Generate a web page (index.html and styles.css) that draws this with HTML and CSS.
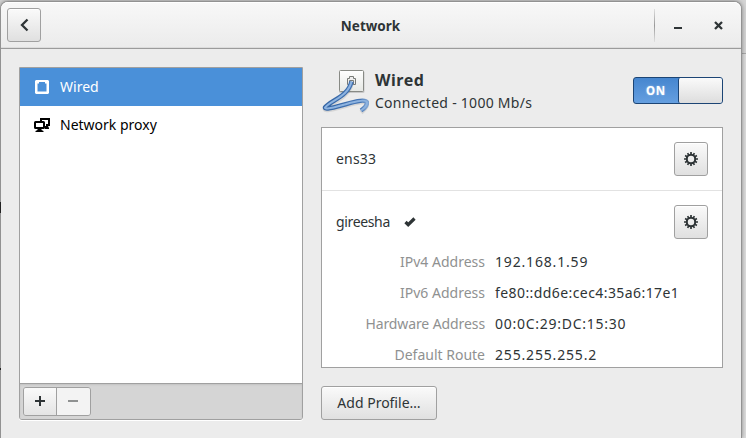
FILE: index.html
```html
<!DOCTYPE html>
<html lang="en">
<head>
<meta charset="utf-8">
<title>Network</title>
<link rel="stylesheet" href="styles.css">
</head>
<body>
<svg width="0" height="0" class="defs">
  <symbol id="gear" viewBox="0 0 14 14">
    <circle cx="7" cy="7" r="4.200" fill="none" stroke="#2e3436" stroke-width="2"/>
    <path stroke="#2e3436" stroke-width="1.700" d="M7 0v3M7 11v3M0 7h3M11 7h3M3.600 1.100l1.300 2.300M9.100 10.600l1.300 2.300M1.100 3.600l2.300 1.300M10.600 9.100l2.300 1.300M1.100 10.400l2.300-1.300M10.600 4.900l2.300-1.300M3.600 12.900l1.300-2.300M9.100 3.400l1.300-2.300"/>
  </symbol>
</svg>
<span class="edge edge-mark"></span>
<span class="edge edge-mark-low"></span>
<div class="window">
  <header class="titlebar">
    <button class="button back" aria-label="Back">
      <svg width="16" height="16" viewBox="0 0 16 16"><path d="M11.500 2.500L6 8l5.500 5.500" fill="none" stroke="#2e3436" stroke-width="2.300"/></svg>
    </button>
    <h1 class="title">Network</h1>
    <div class="controls">
      <svg width="8" height="12" viewBox="0 0 8 12"><path d="M0 9h8" stroke="#2e3436" stroke-width="2"/></svg>
      <svg width="9" height="9" viewBox="0 0 9 9"><path d="M1 1l7 7M8 1l-7 7" stroke="#2e3436" stroke-width="2.300"/></svg>
    </div>
  </header>
  <main class="content">
    <aside class="sidebar">
      <div class="devices">
        <div class="device selected">
          <svg width="16" height="16" viewBox="0 0 16 16"><path fill="#fff" fill-rule="evenodd" d="M2 1h12l1 1v12l-1 1H2l-1-1V2zM5 3v1.500H3.500V12.500h9V4.500H11V3z"/></svg>
          <span>Wired</span>
        </div>
        <div class="device">
          <svg width="16" height="16" viewBox="0 0 16 16"><path d="M7 4V2h8v6h-3" fill="none" stroke="#000" stroke-width="2"/><path d="M11 9h3l1 2v1h-4z"/><rect x="1" y="5" width="9" height="6" rx=".5" fill="#fff" stroke="#000" stroke-width="2"/><path d="M3.500 12h4v1l2 1v1h-8v-1l2-1z"/></svg>
          <span>Network proxy</span>
        </div>
      </div>
      <div class="toolbar">
        <div class="pair">
          <button class="tool" aria-label="Add"><svg width="10" height="10" viewBox="0 0 10 10"><path d="M5 0v10M0 5h10" stroke="#2e3436" stroke-width="2"/></svg></button>
          <button class="tool off" aria-label="Remove"><svg width="10" height="10" viewBox="0 0 10 10"><path d="M0 5h10" stroke="#8f9191" stroke-width="2"/></svg></button>
        </div>
      </div>
    </aside>
    <section class="details">
      <div class="summary">
        <svg class="plug" width="48" height="48" viewBox="0 0 48 48">
          <defs><linearGradient id="plate" x2="0" y2="1"><stop stop-color="#fff"/><stop offset="1" stop-color="#e5e7e3"/></linearGradient>
          <linearGradient id="fade"><stop stop-color="#3465a4"/><stop offset=".85" stop-color="#4676b5"/><stop offset="1" stop-color="#7fa3d0"/></linearGradient></defs>
          <rect x="18" y="4" width="25.500" height="22" rx="1.500" fill="#000" opacity=".15"/>
          <rect x="18.500" y="3.500" width="24" height="21" rx="1" fill="url(#plate)" stroke="#888a85"/>
          <path d="M26.500 17.500v-6h2v-2h4v2h2v6z" fill="#eee" stroke="#777a76"/>
          <path d="M28.500 17.500v-4h4v4" fill="#fff" stroke="#777a76"/>
          <path d="M30.500 15.500C27 31 10 34 4 41c-.5 2 7 .5 14-1.500 12-3.500 27-8 28-3.500 0 3.500-3 6-6 8.500" fill="none" stroke="#555" stroke-width="4.500" opacity=".15" transform="translate(0 1)"/>
          <path d="M30.500 14.500C27 30 10 33 4 40.500c-.5 2 7 .5 14-1.500 12-3.500 27-8 28-3.500 0 3.500-3 6-6 8" fill="none" stroke="url(#fade)" stroke-width="4.500"/>
          <path d="M30.500 14.500C27 30 10 33 4 40.500c-.5 2 7 .5 14-1.500 12-3.500 27-8 28-3.500 0 3.500-3 6-6 8" fill="none" stroke="#8db3e0" stroke-width="2"/>
        </svg>
        <div class="status">
          <h2 class="heading">Wired</h2>
          <div class="link">Connected - 1000 Mb/s</div>
        </div>
        <div class="switch"><span class="on">ON</span><span class="knob"></span></div>
      </div>
      <div class="profiles">
        <div class="profile">
          <span class="name-wide">ens33</span>
          <button class="button gear" aria-label="Options"><svg width="14" height="14"><use href="#gear"/></svg></button>
        </div>
        <div class="profile second">
          <span class="name-tight">gireesha</span>
          <svg class="check" width="12" height="10" viewBox="0 0 12 10"><path d="M1.500 5l2.700 2.700L10.500 1.500" fill="none" stroke="#2e3436" stroke-width="3.200"/></svg>
          <button class="button gear" aria-label="Options"><svg width="14" height="14"><use href="#gear"/></svg></button>
        </div>
        <dl class="facts">
          <dt>IPv4 Address</dt><dd class="numeric">192.168.1.59</dd>
          <dt>IPv6 Address</dt><dd class="mixed">fe80::dd6e:cec4:35a6:17e1</dd>
          <dt class="tight">Hardware Address</dt><dd class="mac">00:0C:29:DC:15:30</dd>
          <dt>Default Route</dt><dd class="numeric">255.255.255.2</dd>
        </dl>
      </div>
      <button class="button add"><span>Add Profile…</span></button>
    </section>
  </main>
</div>
</body>
</html>
```

FILE: styles.css
```css
* { box-sizing: border-box; }
html, body { margin: 0; height: 438px; overflow: hidden; }
body {
  position: relative;
  padding-top: 1px;
  background: linear-gradient(#d4d4d4 53px, #a9a9a9 53px, #a9a9a9 54px, #dcdcdc 54px);
  color: #2e3436;
  font: 14px/20px "Noto Sans", "Open Sans", sans-serif;
}
.defs { position: absolute; }
h1, h2, dl, dd, dt { margin: 0; }
svg { display: block; flex: none; }
span { white-space: nowrap; }
.edge { position: absolute; z-index: 1; left: 0; width: 1px; background: #222; }
.edge-mark { top: 202px; height: 11px; }
.edge-mark-low { top: 368px; height: 2px; }
.window {
  width: 742px;
  height: 437px;
  border: 1px solid #929292;
  border-bottom: 0;
  border-radius: 8px 8px 0 0;
  background: #ececec;
  box-shadow: 0 0 4px rgba(0,0,0,.4);
}
.titlebar {
  display: flex;
  align-items: center;
  height: 47px;
  padding: 0 18px 0 6px;
  border-bottom: 1px solid #9b9b9b;
  border-radius: 7px 7px 0 0;
  background: linear-gradient(#f8f8f8, #ebebeb);
  box-shadow: inset 0 1px #fff, inset 0 -1px #dcdcdc;
}
.title { flex: 1; padding: 2px 0 0 46px; text-align: center; font-size: 13.500px; line-height: 20px; }
.button {
  display: flex;
  align-items: center;
  justify-content: center;
  width: 34px;
  height: 34px;
  padding: 0;
  border: 1px solid #a0a0a0;
  border-radius: 3px;
  background: linear-gradient(#fafafa, #e0e0e0);
  box-shadow: inset 0 1px #fff;
  color: inherit;
  font: inherit;
}
.controls {
  display: flex;
  align-items: center;
  gap: 32px;
  height: 33px;
  padding-left: 19px;
  border-left: 1px solid;
  border-image: linear-gradient(#e4e4e4, #999 50%, #e4e4e4) 1;
}
.content { display: flex; gap: 18px; padding: 18px 18px 0; }
.sidebar { display: flex; flex-direction: column; width: 284px; height: 353px; border: 1px solid #a0a0a0; border-radius: 0 0 3px 3px; box-shadow: 0 1px #fff; }
.devices { flex: 1; background: #fff; color: #000; }
.device { display: flex; align-items: center; gap: 10px; height: 38px; padding-left: 14px; }
.selected { background: #4a90d9; color: #fff; }
.toolbar { height: 36px; padding: 3px; border-top: 1px solid #a0a0a0; border-radius: 0 0 2px 2px; background: #d5d5d5; box-shadow: inset 0 1px 2px #c2c2c2; }
.pair { display: flex; width: 68px; height: 29px; border: 1px solid #a0a0a0; border-radius: 3px; overflow: hidden; }
.tool { display: flex; flex: 0 0 32px; align-items: center; justify-content: center; padding: 0 0 1px; border: 0; background: linear-gradient(#fafafa, #e4e4e4); }
.off { flex: 1; padding-right: 2px; border-left: 1px solid #a0a0a0; background: #f3f3f3; }
.details { width: 402px; }
.summary { display: flex; height: 60px; }
.status { flex: 1; padding-left: 6px; }
.heading { margin-top: 3px; font-size: 16px; line-height: 21px; letter-spacing: .55px; }
.link { line-height: 24px; letter-spacing: .27px; }
.switch { display: flex; width: 90px; height: 27px; margin-top: 10px; border: 1px solid #1c4575; border-radius: 3px; background: linear-gradient(#4686cf, #659fe0); }
.on { flex: 1; color: #fff; font-size: 11.500px; font-weight: 700; line-height: 26px; text-align: center; text-shadow: 0 0 2px #fff8; letter-spacing: .9px; }
.knob { width: 44px; border-left: 1px solid #1c4575; border-radius: 2px; background: linear-gradient(#fafafa, #ddd); }
.profiles { height: 241px; overflow: hidden; border: 1px solid #a0a0a0; background: #fff; }
.profile { display: flex; align-items: center; height: 63px; padding: 0 14px; border-bottom: 1px solid #e2e2e2; }
.second { height: 62px; border: 0; }
.name-wide { letter-spacing: .2px; }
.name-tight { letter-spacing: -.35px; }
.gear { margin-left: auto; }
.check { margin-left: 14px; }
.facts { display: grid; grid-template-columns: 163px 1fr; column-gap: 10px; grid-auto-rows: 31px; margin-top: -7px; line-height: 31px; white-space: nowrap; }
.facts dt { color: #8f9191; text-align: right; }
.facts .tight { letter-spacing: -.1px; }
.numeric { letter-spacing: .83px; }
.mixed { letter-spacing: .42px; }
.mac { letter-spacing: .73px; }
.add { width: 116px; margin-top: 18px; }
```
